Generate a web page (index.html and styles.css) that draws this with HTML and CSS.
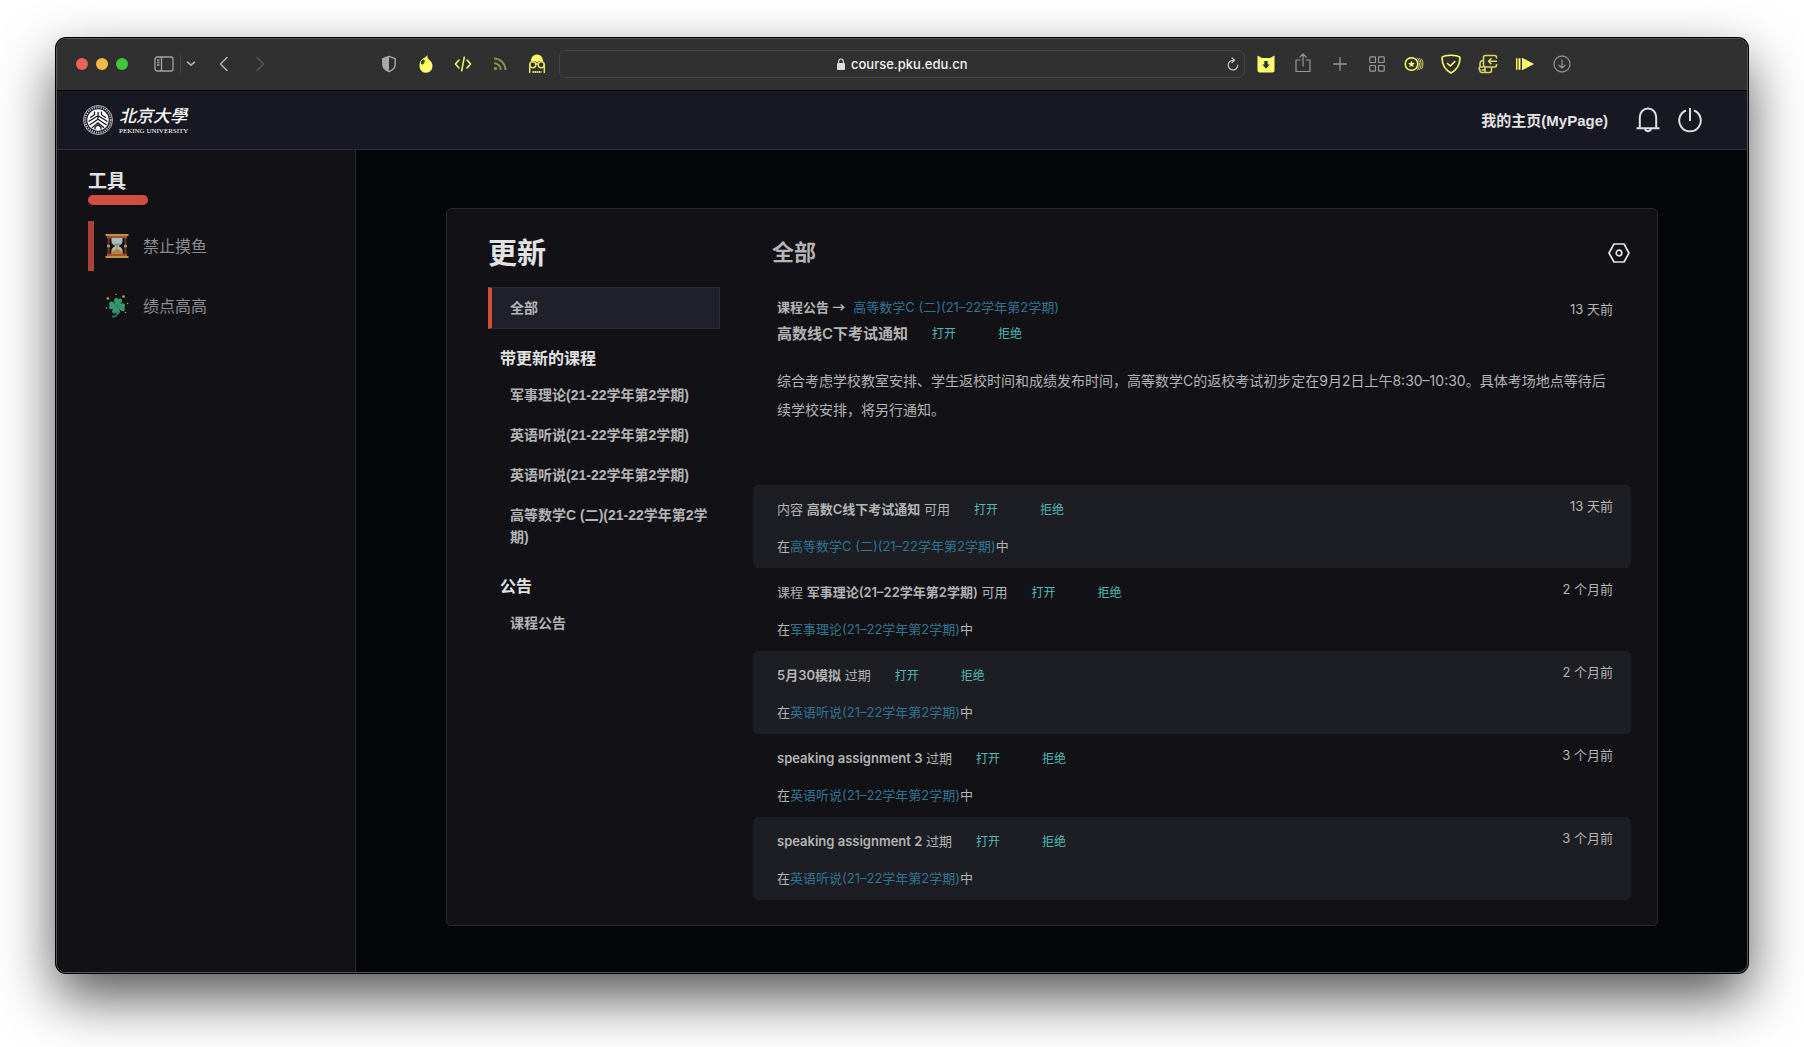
FILE: index.html
```html
<!DOCTYPE html>
<html lang="zh-CN">
<head>
<meta charset="utf-8">
<meta name="viewport" content="width=device-width, initial-scale=1">
<title>北京大学教学网</title>
<link rel="stylesheet" href="styles.css">
</head>
<body>
<div class="window">
  <div class="toolbar">
    <div class="lights">
      <button class="light light-close" aria-label="关闭"></button>
      <button class="light light-min" aria-label="最小化"></button>
      <button class="light light-max" aria-label="缩放"></button>
    </div>
    <div class="nav-tools">
      <button class="tool" aria-label="边栏"><svg width="20" height="16" viewBox="0 0 20 16" fill="none" stroke="#a4a4a4" stroke-width="1.3"><rect x="1" y="1" width="18" height="14" rx="2"/><path d="M7.500 1v14M3 4h2.500M3 6.500h2.500M3 9h2.500"/></svg></button>
      <span class="divider"></span>
      <button class="tool tool-small" aria-label="标签页组"><svg width="10" height="6" viewBox="0 0 10 6" fill="none" stroke="#b4b4b4" stroke-width="1.600" stroke-linecap="round" stroke-linejoin="round"><path d="M1.500 1.200L5 4.200l3.500-3"/></svg></button>
    </div>
    <div class="history">
      <button class="tool" aria-label="后退"><svg width="10" height="16" viewBox="0 0 10 16" fill="none" stroke="#b0b0b0" stroke-width="1.600" stroke-linecap="round" stroke-linejoin="round"><path d="M8 1.500L1.500 8 8 14.500"/></svg></button>
      <button class="tool" aria-label="前进"><svg width="10" height="16" viewBox="0 0 10 16" fill="none" stroke="#565656" stroke-width="1.600" stroke-linecap="round" stroke-linejoin="round"><path d="M2 1.500L8.500 8 2 14.500"/></svg></button>
    </div>
    <div class="extensions extensions-left">
      <button class="tool" aria-label="隐私报告"><svg width="16" height="18" viewBox="0 0 16 18"><path d="M8 1.300L14.200 3.600v6c0 3.400-2.800 5.800-6.200 7.100-3.400-1.300-6.200-3.700-6.200-7.100v-6z" fill="none" stroke="#a8a8a8" stroke-width="1.400" stroke-linejoin="round"/><path d="M8 1.300v15.400c-3.400-1.300-6.200-3.700-6.200-7.100v-6z" fill="#a8a8a8"/></svg></button>
      <button class="tool" aria-label="火焰"><svg width="16" height="20" viewBox="0 0 16 20"><path d="M9.500 1c-.3 2 .2 3.600 2 5 1.800 1.500 3 3.300 3 6a6.500 6.700 0 0 1-13 .3c-.2-3 .5-5.600 3-7.300 1.900-1.300 3.600-2 5-4z" fill="#ffff6b"/><ellipse cx="4.800" cy="8" rx="1.700" ry="2.700" transform="rotate(32 4.800 8)" fill="#444426"/></svg></button>
      <button class="tool" aria-label="代码"><svg width="18" height="16" viewBox="0 0 18 16" fill="none" stroke="#ffff6b" stroke-width="1.500" stroke-linecap="round" stroke-linejoin="round"><path d="M5 4L1.500 8 5 12M13 4l3.500 4-3.500 4M10.300 1.200L7.700 14.800"/></svg></button>
      <button class="tool" aria-label="订阅"><svg width="14" height="14" viewBox="0 0 14 14" fill="none" stroke="#8d8d4c" stroke-width="2"><circle cx="2.500" cy="11.500" r="1.700" fill="#8d8d4c" stroke="none"/><path d="M1 6.300A6.500 6.500 0 0 1 7.700 13M1 1.500A11.500 11.500 0 0 1 12.500 13"/></svg></button>
      <button class="tool" aria-label="脚本"><svg width="18" height="20" viewBox="0 0 18 20"><path d="M3 7.500C2.800 3.500 5.500.6 9 .6s6.200 2.900 6 6.900l-3.500-.7L9 8.500 6.500 6.800z" fill="#ffff6b"/><g fill="none" stroke="#e5e562" stroke-width="1.500"><circle cx="4.800" cy="10.800" r="3"/><circle cx="13.200" cy="10.800" r="3"/><path d="M7.500 10h3M1.700 10v9M16.300 10v9"/><path d="M4.500 18h9" stroke-width="1.800" stroke-dasharray="1.600 .5"/></g></svg></button>
    </div>
    <div class="address">
      <label class="address-label" for="url"><svg width="8" height="12" viewBox="0 0 8 12"><rect y="5" width="8" height="7" rx="1" fill="#dcdcdc"/><path d="M1.700 5V3.300a2.300 2.300 0 0 1 4.600 0V5" fill="none" stroke="#dcdcdc" stroke-width="1.200"/></svg></label>
      <input class="address-input" id="url" type="text" value="course.pku.edu.cn" aria-label="网址">
      <button class="reload" aria-label="重新载入"><svg width="12" height="14" viewBox="0 0 12 14" fill="none" stroke="#c6c6c6" stroke-width="1.200" stroke-linecap="round" stroke-linejoin="round"><path d="M7 3.300H6a4.800 4.800 0 1 0 4.800 4.800M5 1l2.500 2.300L5 5.600"/></svg></button>
    </div>
    <div class="extensions extensions-right">
      <button class="tool" aria-label="下载助手"><svg width="18" height="18" viewBox="0 0 18 18"><path d="M.5.500L5 3h8l4.500-2.500V15.500a2 2 0 0 1-2 2h-13a2 2 0 0 1-2-2z" fill="#ffff6b"/><path d="M7.300 6h3.400v3.500h2L9 13.800 5.300 9.500h2z" fill="#303030"/></svg></button>
      <button class="tool tool-raised" aria-label="共享"><svg width="16" height="20" viewBox="0 0 16 20" fill="none" stroke="#989898" stroke-width="1.200" stroke-linecap="round" stroke-linejoin="round"><path d="M5 7H1V18.500h14V7h-4M8 13V1.200M4.800 4.200L8 1l3.200 3.200"/></svg></button>
      <button class="tool" aria-label="新标签页"><svg width="14" height="14" viewBox="0 0 14 14" stroke="#989898" stroke-width="1.300" stroke-linecap="round"><path d="M7 .7v12.600M.7 7h12.600"/></svg></button>
      <button class="tool" aria-label="标签页概览"><svg width="16" height="16" viewBox="0 0 16 16" fill="none" stroke="#989898" stroke-width="1.200"><rect x=".8" y=".8" width="5.700" height="5.700" rx=".8"/><rect x="9.500" y=".8" width="5.700" height="5.700" rx=".8"/><rect x=".8" y="9.500" width="5.700" height="5.700" rx=".8"/><rect x="9.500" y="9.500" width="5.700" height="5.700" rx=".8"/></svg></button>
      <button class="tool" aria-label="硬币"><svg width="20" height="16" viewBox="0 0 20 16" fill="none" stroke="#ffff6b"><circle cx="7.500" cy="8" r="6.300" stroke-width="1.500"/><path d="M7.500 4.700l1 2.200 2.300.2-1.700 1.600.5 2.400-2.100-1.200-2.100 1.200.5-2.400-1.700-1.600 2.300-.2z" fill="#ffff6b" stroke="none"/><path d="M13 1.700c3.200 3 3.200 9.600 0 12.600M15.200 2.200c2.500 3 2.500 8.600 0 11.600M17.400 2.800c2 2.800 2 7.600 0 10.400" stroke-width="1" opacity=".8"/></svg></button>
      <button class="tool" aria-label="防护"><svg width="20" height="20" viewBox="0 0 20 20" fill="none" stroke="#ffff6b" stroke-width="1.600" stroke-linecap="round" stroke-linejoin="round"><path d="M1.200 3.200C4.500.6 15.500.6 18.800 3.200c.5 6.600-1.500 11.800-8.800 15.800C2.700 15 .7 9.800 1.200 3.200z"/><path d="M6.500 9.500L9.300 12l4.500-4.500"/></svg></button>
      <button class="tool" aria-label="登录助手"><svg width="20" height="20" viewBox="0 0 20 20" fill="none" stroke="#d8d85c" stroke-width="1.600" stroke-linejoin="round"><path d="M18.500 10v1a2 2 0 0 1-2 2h-9a2 2 0 0 1-2-2V3.500a2 2 0 0 1 2-2h9a2 2 0 0 1 2 2v1M19 7.200h-8.500M13.500 4.200L10.500 7.200l3 3"/><path d="M5.500 6.500C3 6.500 2 8 2 10v3h3.500M2 13c-1.200.5-1.200 2.500 0 3v.5a2 2 0 0 0 2 2h7.500a2 2 0 0 0 2-2V13M3.500 16h3.500v-3M7 16.200v2"/></svg></button>
      <button class="tool" aria-label="加速播放"><svg width="20" height="14" viewBox="0 0 20 14" fill="#ffff6b"><path d="M7 .8L19 7 7 13.200z"/><path d="M1.700 1.300v11.400" stroke="#ffff6b" stroke-width="1.400"/><path d="M4.500 1.300v11.400" stroke="#ffff6b" stroke-width="2"/></svg></button>
      <button class="tool" aria-label="下载"><svg width="18" height="18" viewBox="0 0 18 18" fill="none" stroke="#8e8e8e" stroke-width="1.300" stroke-linecap="round" stroke-linejoin="round"><circle cx="9" cy="9" r="8"/><path d="M9 5v8M6 10.200L9 13l3-2.800"/></svg></button>
    </div>
  </div>

  <header class="site-header">
    <a class="brand" href="#">
      <svg width="30" height="30" viewBox="0 0 30 30"><circle cx="15" cy="15" r="14.500" fill="none" stroke="#d8d8dc" stroke-width=".8"/><circle cx="15" cy="15" r="12.700" fill="none" stroke="#b8b8be" stroke-width="1.900" stroke-dasharray="1.300 1"/><circle cx="15" cy="15" r="10.700" fill="#fff"/><g fill="none" stroke="#181822" stroke-width="1.300"><path d="M15 7v7M11.500 6.500v3.200L7 12.700M18.500 6.500v3.200l4.500 3M5.500 16.500L15 10.800l9.500 5.700M6.500 20L15 14.300 23.500 20M9 22.800l6-5 6 5M12 24.500v-2.300l3-2.400 3 2.400v2.300"/></g></svg>
      <span class="brand-text">
        <span class="brand-cn">北京大學</span>
        <span class="brand-en">PEKING UNIVERSITY</span>
      </span>
    </a>
    <nav class="header-nav">
      <a class="my-page" href="#">我的主页(MyPage)</a>
      <button class="header-button" aria-label="通知"><svg width="24" height="26" viewBox="0 0 24 26" fill="none" stroke="#e0e0e0" stroke-width="2"><path d="M3.800 20.500V10a8.200 8.500 0 0 1 16.400 0v10.500M.5 21.300h23M9 21.500c.3 3.500 5.700 3.500 6 0"/></svg></button>
      <button class="header-button" aria-label="退出"><svg width="24" height="26" viewBox="0 0 24 26" fill="none" stroke="#e0e0e0" stroke-width="2"><path d="M8 3.500A10.800 10.800 0 1 0 16 3.500M12 1v13"/></svg></button>
    </nav>
  </header>

  <div class="page">
    <aside class="sidebar">
      <h2 class="sidebar-title">工具</h2>
      <nav class="sidebar-nav">
        <a class="sidebar-item sidebar-item-active" href="#">
          <svg width="24" height="26" viewBox="0 0 24 26"><path d="M2.500 3h2v20h-2zM19.500 3h2v20h-2z" fill="#6f3524"/><path d="M2 3h20v2.200H2zM2 20.800h20V23H2z" fill="#a94e34"/><path d="M6.500 5h11v4c0 2-2.500 3-4 4 1.500 1 4 2.500 4 4v4h-11v-4c0-1.500 2.500-3 4-4-1.500-1-4-2-4-4z" fill="#a3bcc7"/><path d="M8.500 10.500h7L12.500 13v3l5 2.500V21h-11v-2.500l5-2.500v-3z" fill="#b3873c"/><path d="M.5 1h23v2H.500zM.5 23h23v2H.500z" fill="#b99449"/><circle cx="3.500" cy="13" r="1.600" fill="#c49842"/><circle cx="20.500" cy="13" r="1.600" fill="#c49842"/></svg>
          <span>禁止摸鱼</span>
        </a>
        <a class="sidebar-item" href="#">
          <svg width="24" height="26" viewBox="0 0 24 26"><g fill="#36956c"><path d="M12 13C8.500 9.500 8.500 6 10.500 5c1.400-.6 2.300.2 2.600 1.200C14 5.200 16.300 5 17 7c.7 2.300-1.700 4.300-5 6z"/><path d="M12 13c2.700-3 6.500-3.500 7.800-1.600.8 1.300 0 2.200-.8 2.800 1 .4 1.600 2.600-.1 3.700-2.200 1.200-4.500-1.400-6.900-4.900z"/><path d="M12 13c3 3 3.800 6.500 2 7.800-1.300.8-2.300 0-2.700-1-.8 1-3 1-3.900-.6-.9-2.200 1.100-4.300 4.600-6.200z"/><path d="M12 13c-2.700 3.500-6.500 4.200-7.800 2.300-.8-1.300-.2-2.300.8-2.900-1.200-.6-1.400-2.800.3-3.700C7.600 7.700 9.800 10 12 13z"/></g><path d="M12.500 18c.7 3.800-1.800 6-5.500 5.700" fill="none" stroke="#2b7d76" stroke-width="1.500"/><g fill="#c9a13f"><circle cx="2.800" cy="5.500" r="1.300"/><circle cx="11" cy="1.200" r=".8"/><circle cx="18.500" cy="3.500" r="1.300"/><circle cx="22.500" cy="10.500" r=".8"/><circle cx="1.500" cy="15" r=".8"/><circle cx="20.500" cy="19.500" r=".8"/></g></svg>
          <span>绩点高高</span>
        </a>
      </nav>
    </aside>

    <main class="content">
      <section class="card">
        <div class="filters">
          <h1 class="filters-title">更新</h1>
          <nav>
            <a class="filter filter-active" href="#">全部</a>
            <h2 class="filters-group">带更新的课程</h2>
            <a class="filter" href="#">军事理论(21-22学年第2学期)</a>
            <a class="filter" href="#">英语听说(21-22学年第2学期)</a>
            <a class="filter" href="#">英语听说(21-22学年第2学期)</a>
            <a class="filter" href="#">高等数学C (二)(21-22学年第2学期)</a>
            <h2 class="filters-group">公告</h2>
            <a class="filter" href="#">课程公告</a>
          </nav>
        </div>

        <div class="stream">
          <div class="stream-header">
            <h2 class="stream-title">全部</h2>
            <button class="settings" aria-label="设置"><svg width="22" height="20" viewBox="0 0 22 20" fill="none" stroke="#e2e2e2" stroke-width="1.700" stroke-linejoin="round"><path d="M6 1h10l5 9-5 9H6l-5-9z"/><circle cx="11" cy="10" r="2.800"/></svg></button>
          </div>

          <article class="notice">
            <div class="notice-main">
              <p class="notice-source"><strong>课程公告 <span class="arrow">→</span></strong><a class="course" href="#">高等数学C (二)(21–22学年第2学期)</a></p>
              <div class="notice-heading">
                <h3 class="notice-title">高数线C下考试通知</h3>
                <div class="actions"><button class="action">打开</button><button class="action">拒绝</button></div>
              </div>
            </div>
            <time class="when">13 天前</time>
            <p class="notice-body">综合考虑学校教室安排、学生返校时间和成绩发布时间，高等数学C的返校考试初步定在9月2日上午8:30–10:30。具体考场地点等待后续学校安排，将另行通知。</p>
          </article>

          <article class="entry entry-shaded">
            <div class="entry-main">
              <div class="entry-line"><p>内容 <strong>高数C线下考试通知</strong> 可用</p><div class="actions"><button class="action">打开</button><button class="action">拒绝</button></div></div>
              <p>在<a class="course" href="#">高等数学C (二)(21–22学年第2学期)</a>中</p>
            </div>
            <time class="when">13 天前</time>
          </article>
          <article class="entry">
            <div class="entry-main">
              <div class="entry-line"><p>课程 <strong>军事理论(21–22学年第2学期)</strong> 可用</p><div class="actions"><button class="action">打开</button><button class="action">拒绝</button></div></div>
              <p>在<a class="course" href="#">军事理论(21–22学年第2学期)</a>中</p>
            </div>
            <time class="when">2 个月前</time>
          </article>
          <article class="entry entry-shaded">
            <div class="entry-main">
              <div class="entry-line"><p><strong>5月30模拟</strong> 过期</p><div class="actions"><button class="action">打开</button><button class="action">拒绝</button></div></div>
              <p>在<a class="course" href="#">英语听说(21–22学年第2学期)</a>中</p>
            </div>
            <time class="when">2 个月前</time>
          </article>
          <article class="entry">
            <div class="entry-main">
              <div class="entry-line"><p><strong>speaking assignment 3</strong> 过期</p><div class="actions"><button class="action">打开</button><button class="action">拒绝</button></div></div>
              <p>在<a class="course" href="#">英语听说(21–22学年第2学期)</a>中</p>
            </div>
            <time class="when">3 个月前</time>
          </article>
          <article class="entry entry-shaded">
            <div class="entry-main">
              <div class="entry-line"><p><strong>speaking assignment 2</strong> 过期</p><div class="actions"><button class="action">打开</button><button class="action">拒绝</button></div></div>
              <p>在<a class="course" href="#">英语听说(21–22学年第2学期)</a>中</p>
            </div>
            <time class="when">3 个月前</time>
          </article>
        </div>
      </section>
    </main>
  </div>
</div>
</body>
</html>
```
FILE: styles.css
```css
* { box-sizing: border-box; }

:root {
  --ui-font: "Liberation Sans", "Noto Sans CJK SC", sans-serif;
  --text-font: Inter, "Noto Sans CJK SC", sans-serif;
  --text: #b4b4b4;
  --bright: #e2e2e2;
  --red: #cf4e41;
  --line: #2a2c32;
}

body {
  margin: 0;
  padding: 38px 56px 74px;
  min-height: 100vh;
  display: flex;
  background: #fff;
  color: var(--text);
  font: 13px/22px var(--text-font);
}

h1, h2, h3, p { margin: 0; }
a { color: inherit; text-decoration: none; }
strong { font-weight: 600; }
svg { display: block; flex: none; }
button {
  padding: 0;
  border: 0;
  background: none;
  color: inherit;
  font: inherit;
}

.window {
  flex: 1;
  min-width: 0;
  display: flex;
  flex-direction: column;
  overflow: hidden;
  border: 1px solid #55565a;
  border-radius: 10px;
  background: #05060a;
  box-shadow: 0 0 0 1px #000, 0 24px 56px rgba(0, 0, 0, .68);
}

/* Browser toolbar */
.toolbar {
  height: 52px;
  display: flex;
  align-items: center;
  padding: 0 173px 2px 19px;
  border-bottom: 1px solid #000;
  background: #303030;
}
.lights { display: flex; gap: 8px; }
.light { width: 12px; height: 12px; border-radius: 50%; }
.light-close { background: #ec6255; }
.light-min { background: #efbb40; }
.light-max { background: #44c240; }
.tool {
  width: 24px;
  height: 24px;
  display: grid;
  place-items: center;
}
.tool-small { width: 12px; }
.tool-raised { padding-bottom: 2px; }
.nav-tools {
  display: flex;
  align-items: center;
  gap: 4px;
  margin-left: 24px;
}
.divider { width: 1px; height: 18px; background: #484848; }
.history { display: flex; gap: 12px; margin-left: 15px; }
.extensions { display: flex; gap: 13px; }
.extensions-left { margin: 0 10px 0 105px; }
.extensions-right { margin-left: 9px; }
.address {
  flex: 1;
  height: 28px;
  display: grid;
  grid-template-columns: 1fr auto 1fr;
  align-items: center;
  gap: 6px;
  padding: 0 5px 0 19px;
  border: 1px solid #464646;
  border-radius: 7px;
}
.address-label { justify-self: end; }
.address-input {
  width: 116px;
  padding: 0;
  border: 0;
  outline: 0;
  background: none;
  color: #f2f2f2;
  font: 500 13px/20px var(--text-font);
}
.reload { justify-self: end; }

/* Site header */
.site-header {
  height: 59px;
  display: flex;
  align-items: center;
  justify-content: space-between;
  padding: 0 45px 0 26px;
  border-bottom: 1px solid #32333a;
  background: #181822;
}
.brand { display: flex; gap: 6px; color: #fff; }
.brand-text { display: flex; flex-direction: column; padding-top: 2px; }
.brand-cn { font: italic 500 17px/20px var(--ui-font); }
.brand-en { font: 7px/8px "Liberation Serif", serif; }
.header-nav { display: flex; align-items: center; color: var(--bright); }
.my-page {
  margin-right: 10px;
  padding-top: 2px;
  font: 700 15px/22px var(--ui-font);
}
.header-button { margin-left: 18px; }

/* Tools sidebar */
.page { flex: 1; display: flex; }
.sidebar {
  flex: none;
  width: 299px;
  padding: 21px 31px;
  border-right: 1px solid var(--line);
  background: #121116;
}
.sidebar-title {
  color: var(--bright);
  font: 700 19px/22px var(--ui-font);
}
.sidebar-title::after {
  content: "";
  display: block;
  width: 60px;
  height: 10px;
  margin-top: 2px;
  border-radius: 5px;
  background: var(--red);
}
.sidebar-nav {
  display: flex;
  flex-direction: column;
  gap: 10px;
  margin-top: 16px;
}
.sidebar-item {
  height: 50px;
  display: flex;
  align-items: center;
  gap: 14px;
  padding-left: 11px;
  border-left: 6px solid transparent;
  color: #8c8c8e;
  font-size: 16px;
}
.sidebar-item-active { border-color: #ab4238; }

/* Updates card */
.content { flex: 1; min-width: 0; padding: 58px 89px 45px 90px; }
.card {
  display: flex;
  gap: 33px;
  padding: 0 26px 25px 41px;
  border: 1px solid #262a2e;
  border-radius: 5px;
  background: #121116;
}
.filters { flex: none; width: 232px; font: 700 14px/22px var(--ui-font); }
.filters-title {
  padding: 25px 0 13px;
  color: var(--bright);
  font: 700 29px/40px var(--ui-font);
}
.filter { display: block; padding: 9px 10px 9px 22px; }
.filter-active {
  padding-left: 18px;
  border: 1px solid #2c2e36;
  border-left: 4px solid var(--red);
  background: #20202a;
}
.filters-group {
  padding: 19px 12px 5px;
  color: var(--bright);
  font: 700 16px/22px var(--ui-font);
}

.stream { flex: 1; min-width: 0; }
.stream-header {
  height: 78px;
  display: flex;
  align-items: center;
  justify-content: space-between;
  padding: 10px 1px 0 19px;
}
.stream-title { font: 700 22px/32px var(--ui-font); }
.notice {
  display: grid;
  grid-template-columns: 1fr auto;
  padding: 9px 18px 61px 24px;
}
.notice .when { padding-top: 2px; }
.notice-source { display: flex; gap: 8px; }
.arrow { font-family: "Noto Sans CJK SC", sans-serif; line-height: 1; }
.notice-heading { display: flex; align-items: center; line-height: 30px; }
.notice-title { font-size: 15px; font-weight: 600; }
.notice-body {
  grid-column: 1 / -1;
  margin-top: 17px;
  font-size: 14px;
  line-height: 29px;
}
.entry {
  display: flex;
  justify-content: space-between;
  padding: 10px 18px 11px 24px;
  border-radius: 5px;
}
.entry-shaded { background: #1d1e23; }
.entry-main {
  display: flex;
  flex-direction: column;
  gap: 14px;
  padding-top: 3px;
}
.entry-line { display: flex; }
.actions { display: flex; gap: 42px; margin-left: 24px; padding-top: 1px; }
.action { color: #50b9b4; font-size: 12px; }
.course { color: #2f7591; }
.when { white-space: nowrap; }
```
